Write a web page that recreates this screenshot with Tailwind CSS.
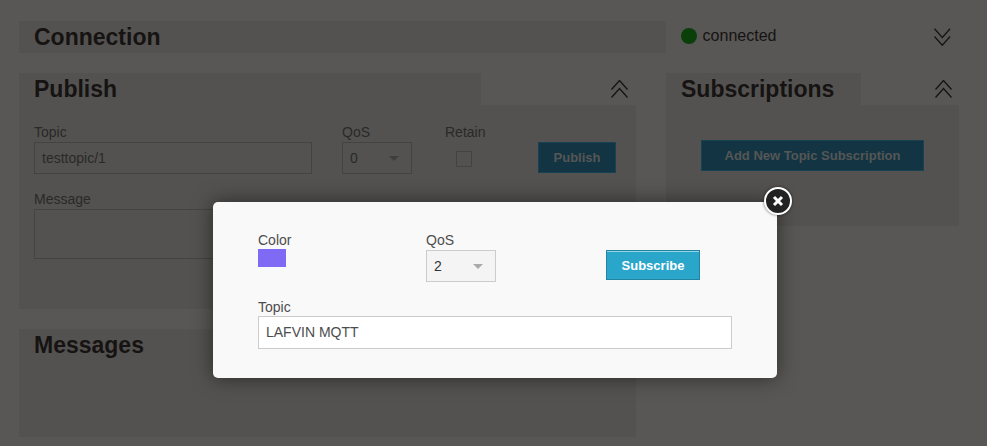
<!DOCTYPE html>
<html lang="en">
<head>
<meta charset="UTF-8">
<title>MQTT Client</title>
<script src="https://cdn.jsdelivr.net/npm/@tailwindcss/browser@4"></script>
</head>
<body class="bg-[#585755] font-['Liberation_Sans',Arial,sans-serif] text-[#2a2928] overflow-hidden">
<div class="relative h-[446px] w-[987px] overflow-hidden pt-[21px] pl-[19px]">

  <!-- Connection row -->
  <div class="flex h-[32px]">
    <div class="w-[647px] bg-[#535250] pl-[15px] text-[23px] leading-[33px] font-bold text-[#161312]">Connection</div>
    <div class="flex items-center pl-[15px] w-[285px] -mt-[2px]">
      <span class="w-[16px] h-[16px] rounded-full bg-[#0a3f09]"></span>
      <span class="ml-[6px] text-[16px] text-[#161312]">connected</span>
      <svg class="ml-[158px] mt-[2px]" width="17" height="18" viewBox="0 0 17 18" fill="none" stroke="#141414" stroke-width="1.3"><path d="M.5 .5l8 9 8-9M.5 8.5l8 9 8-9"/></svg>
    </div>
  </div>

  <div class="flex mt-[20px]">
    <!-- Left column -->
    <div class="w-[617px]">
      <div class="flex h-[32px]">
        <div class="w-[462px] bg-[#535250] pl-[15px] text-[23px] leading-[33px] font-bold text-[#161312]">Publish</div>
        <svg class="ml-[130px] mt-[7px]" width="17" height="18" viewBox="0 0 17 18" fill="none" stroke="#141414" stroke-width="1.3"><path d="M.5 9.5l8-9 8 9M.5 17.5l8-9 8 9"/></svg>
      </div>
      <div class="h-[204px] bg-[#535250] pl-[15px] pt-[19px] text-[14px]">
        <div class="flex">
          <div class="w-[308px]">
            <div class="leading-[16px]">Topic</div>
            <div class="mt-[2px] h-[32px] w-[278px] border border-[#444341] pl-[7px] leading-[30px]">testtopic/1</div>
          </div>
          <div class="w-[103px]">
            <div class="leading-[16px]">QoS</div>
            <div class="mt-[2px] h-[32px] w-[70px] border border-[#444341] pl-[7px] leading-[30px] flex items-center justify-between pr-[12px]">0<span class="w-0 h-0 border-x-[5px] border-x-transparent border-t-[5px] border-t-[#3f3e3d]"></span></div>
          </div>
          <div class="w-[93px]">
            <div class="leading-[16px]">Retain</div>
            <div class="mt-[11px] ml-[11px] w-[16px] h-[16px] border border-[#444341]"></div>
          </div>
          <div class="mt-[18px] h-[31px] w-[78px] bg-[#133543] border border-[#184254] text-center text-[13px] text-[#565656] font-bold leading-[29px]">Publish</div>
        </div>
        <div class="mt-[17px] leading-[16px]">Message</div>
        <div class="h-[50px] w-[220px] border border-[#444341] mt-[2px]"></div>
      </div>
      <div class="mt-[20px] h-[108px] bg-[#535250] pl-[15px] text-[23px] leading-[33px] font-bold text-[#161312]">Messages</div>
    </div>

    <!-- Right column -->
    <div class="w-[293px] ml-[30px]">
      <div class="flex h-[32px]">
        <div class="w-[195px] bg-[#535250] pl-[15px] text-[23px] leading-[33px] font-bold text-[#161312]">Subscriptions</div>
        <svg class="ml-[74px] mt-[7px]" width="17" height="18" viewBox="0 0 17 18" fill="none" stroke="#141414" stroke-width="1.3"><path d="M.5 9.5l8-9 8 9M.5 17.5l8-9 8 9"/></svg>
      </div>
      <div class="h-[121px] bg-[#535250] pt-[35px] pl-[35px]">
        <div class="h-[31px] w-[223px] bg-[#133543] border border-[#184254] text-center text-[13px] text-[#565656] font-bold leading-[30px]">Add New Topic Subscription</div>
      </div>
    </div>
  </div>

  <!-- Modal -->
  <div class="absolute left-[213px] top-[202px] w-[564px] h-[176px] bg-[#f9f9f9] rounded-[5px] shadow-[0_0_20px_rgba(0,0,0,0.5)] pl-[45px] pt-[30px] text-[14px] text-[#4d4d4d]">
    <div class="flex">
      <div class="w-[168px]">
        <div class="leading-[16px]">Color</div>
        <div class="w-[28px] h-[18px] bg-[#7f6af5] mt-[1px]"></div>
      </div>
      <div class="w-[180px]">
        <div class="leading-[16px]">QoS</div>
        <div class="mt-[2px] h-[32px] w-[70px] border border-[#cccccc] bg-[#f4f4f4] pl-[7px] flex items-center justify-between pr-[12px] text-[#333]">2<span class="w-0 h-0 border-x-[5px] border-x-transparent border-t-[5px] border-t-[#aaaaaa]"></span></div>
      </div>
      <div class="mt-[18px] h-[30px] w-[94px] bg-[#2ba6cb] border border-[#2284a1] shadow-[inset_0_1px_0_rgba(255,255,255,0.5)] text-center text-white font-bold text-[13px] leading-[29px]">Subscribe</div>
    </div>
    <div class="mt-[17px] leading-[16px]">Topic</div>
    <div class="mt-[1px] h-[33px] w-[474px] border border-[#cccccc] bg-white pl-[7px] leading-[31px] text-[#4d4d4d]">LAFVIN MQTT</div>
  </div>

  <!-- Close button -->
  <div class="absolute left-[764px] top-[187px] w-[28px] h-[28px] rounded-full bg-[#222222] border-[2px] border-white shadow-[0_0_3px_rgba(0,0,0,0.6)] flex items-center justify-center">
    <svg width="12" height="12" viewBox="0 0 12 12" stroke="#ffffff" stroke-width="3"><path d="M2 2l8 8M10 2l-8 8"/></svg>
  </div>
</div>
</body>
</html>
